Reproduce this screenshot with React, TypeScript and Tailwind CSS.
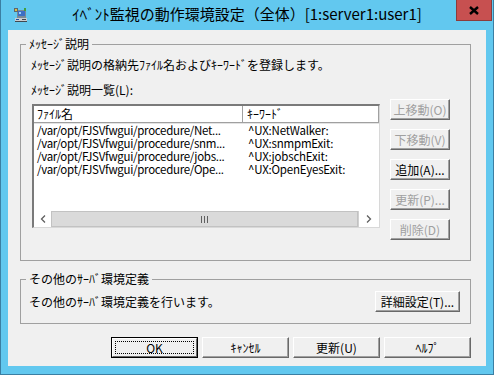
import React from "react";

const FONT = "font-['Noto_Sans_CJK_JP','Noto_Sans_CJK_SC',sans-serif]";

type BtnProps = {
  label: string;
  w: string;
  h?: string;
  disabled?: boolean;
  isDefault?: boolean;
};

function Btn({ label, w, h = "h-[21px]", disabled, isDefault }: BtnProps) {
  if (isDefault) {
    return (
      <div className={`${w} ${h} border border-black bg-[#f0f0f0]`}>
        <div className="h-full border border-t-white border-l-white border-r-[#696969] border-b-[#696969] p-[2px]">
          <div className="h-full flex items-center justify-center border border-dotted border-black text-[12px] leading-none text-black">
            {label}
          </div>
        </div>
      </div>
    );
  }
  return (
    <div
      className={`${w} ${h} flex items-center justify-center bg-[#f0f0f0] border border-t-white border-l-white border-r-[#696969] border-b-[#696969] shadow-[inset_-1px_-1px_0_#a0a0a0] text-[12px] leading-none ${
        disabled ? "text-[#a0a0a0]" : "text-black"
      }`}
    >
      {label}
    </div>
  );
}

const rows = [
  ["/var/opt/FJSVfwgui/procedure/Net...", "^UX:NetWalker:"],
  ["/var/opt/FJSVfwgui/procedure/snm...", "^UX:snmpmExit:"],
  ["/var/opt/FJSVfwgui/procedure/jobs...", "^UX:jobschExit:"],
  ["/var/opt/FJSVfwgui/procedure/Ope...", "^UX:OpenEyesExit:"],
];

function AppIcon() {
  return (
    <svg width="16" height="16" viewBox="0 0 16 16">
      <rect x="4" y="3" width="9" height="8" fill="#7a8a96" />
      <rect x="5" y="4" width="7" height="5" fill="#3c6fc4" />
      <rect x="6" y="5" width="2" height="2" fill="#9ad0ff" />
      <rect x="1" y="1" width="4" height="4" fill="#5c6670" />
      <rect x="2" y="2" width="2" height="2" fill="#e0c040" />
      <rect x="11" y="1" width="2" height="3" fill="#40a040" />
      <rect x="2" y="11" width="12" height="3" fill="#c8ccd0" />
      <rect x="3" y="12" width="3" height="1" fill="#2050a0" />
      <rect x="9" y="12" width="4" height="1" fill="#404850" />
      <rect x="2" y="14" width="12" height="1" fill="#404850" />
    </svg>
  );
}

export default function App() {
  return (
    <div className={`w-[494px] h-[375px] bg-[#62c8ef] border-x border-b border-[#3b7fa3] flex flex-col ${FONT}`}>
      {/* title bar */}
      <div className="h-[30px] grid grid-cols-[1fr_auto_1fr]">
        <div className="pl-[12px] pt-[7px]">
          <AppIcon />
        </div>
        <div className="flex items-center text-[15px] text-black whitespace-nowrap pb-[1px]">
          ｲﾍﾞﾝﾄ監視の動作環境設定（全体）[1:server1:user1]
        </div>
        <div className="flex justify-end pr-[1px]">
          <div className="w-[36px] h-[21px] bg-[#c75050] border border-t-0 border-[#8c3b3b] flex items-center justify-center">
            <svg width="10" height="9" viewBox="0 0 10 9">
              <path d="M1 1 L9 8 M9 1 L1 8" stroke="#000" strokeWidth="2.4" />
            </svg>
          </div>
        </div>
      </div>

      {/* client area */}
      <div className="mx-[7px] h-[336px] bg-[#f0f0f0] px-[12px] pt-[7px] text-[12px] text-black">
        <fieldset className="w-[451px] border border-[#a0a0a0]">
          <legend className="ml-[5px] px-[3px] leading-[14px]">ﾒｯｾｰｼﾞ説明</legend>
          <div className="pl-[10px] pb-[20px]">
            <p className="mt-[7px] leading-[14px]">ﾒｯｾｰｼﾞ説明の格納先ﾌｧｲﾙ名およびｷｰﾜｰﾄﾞを登録します。</p>
            <div className="flex mt-[11px]">
              <div className="flex flex-col">
                <div className="leading-[14px]">ﾒｯｾｰｼﾞ説明一覧(L):</div>
                <div className="mt-[7px] ml-px w-[348px] h-[124px] flex flex-col bg-white border-l-2 border-t-2 border-l-[#7a7a7a] border-t-[#7a7a7a] border-r border-b border-r-[#d8d8d8] border-b-[#d8d8d8]">
                  <div className="h-[17px] flex border-b border-[#a0a0a0] shadow-[0_1px_0_#e3e3e3]">
                    <div className="w-[209px] pl-[3px] leading-[16px] border-r border-[#a0a0a0] shadow-[1px_0_0_#ffffff]">
                      ﾌｧｲﾙ名
                    </div>
                    <div className="flex-1 pl-[4px] leading-[16px] border-r border-[#a0a0a0]">ｷｰﾜｰﾄﾞ</div>
                  </div>
                  <div className="flex-1 pt-[1px]">
                    {rows.map(([file, key]) => (
                      <div key={key} className="h-[13px] flex leading-[13px] whitespace-nowrap">
                        <div className="w-[210px] pl-[3px] text-[11.5px] tracking-[-0.3px]">{file}</div>
                        <div className="pl-[4px] text-[11.5px] tracking-[-0.2px]">{key}</div>
                      </div>
                    ))}
                  </div>
                  <div className="h-[16px] flex">
                    <div className="w-[17px] bg-white flex items-center justify-center">
                      <svg width="6" height="8" viewBox="0 0 6 8">
                        <path d="M5 0.5 L1.5 4 L5 7.5" stroke="#606060" strokeWidth="1.3" fill="none" />
                      </svg>
                    </div>
                    <div className="flex-1 bg-[#dadada] border border-[#c2c2c2] flex items-center justify-center gap-[2px]">
                      <span className="w-px h-[7px] bg-[#606060]" />
                      <span className="w-px h-[7px] bg-[#606060]" />
                      <span className="w-px h-[7px] bg-[#606060]" />
                    </div>
                    <div className="w-[21px] bg-white border-l border-[#d0d0d0] flex items-center justify-center">
                      <svg width="6" height="8" viewBox="0 0 6 8">
                        <path d="M1 0.5 L4.5 4 L1 7.5" stroke="#606060" strokeWidth="1.3" fill="none" />
                      </svg>
                    </div>
                  </div>
                </div>
              </div>
              <div className="ml-[10px] mt-[16px] flex flex-col gap-[9px]">
                <Btn label="上移動(O)" w="w-[60px]" disabled />
                <Btn label="下移動(V)" w="w-[60px]" disabled />
                <Btn label="追加(A)..." w="w-[60px]" />
                <Btn label="更新(P)..." w="w-[60px]" disabled />
                <Btn label="削除(D)" w="w-[60px]" disabled />
              </div>
            </div>
          </div>
        </fieldset>

        <fieldset className="mt-[11px] w-[451px] border border-[#a0a0a0]">
          <legend className="ml-[5px] px-[3px] leading-[14px]">その他のｻｰﾊﾞ環境定義</legend>
          <div className="mt-[5px] pl-[8px] pr-[10px] pb-[11px] flex items-center justify-between">
            <span className="leading-[14px]">その他のｻｰﾊﾞ環境定義を行います。</span>
            <Btn label="詳細設定(T)..." w="w-[85px]" h="h-[21px]" />
          </div>
        </fieldset>

        <div className="mt-[13px] w-[451px] flex justify-end gap-[4px]">
          <Btn label="OK" w="w-[87px]" isDefault />
          <Btn label="ｷｬﾝｾﾙ" w="w-[87px]" />
          <Btn label="更新(U)" w="w-[87px]" />
          <Btn label="ﾍﾙﾌﾟ" w="w-[87px]" />
        </div>
      </div>
    </div>
  );
}
